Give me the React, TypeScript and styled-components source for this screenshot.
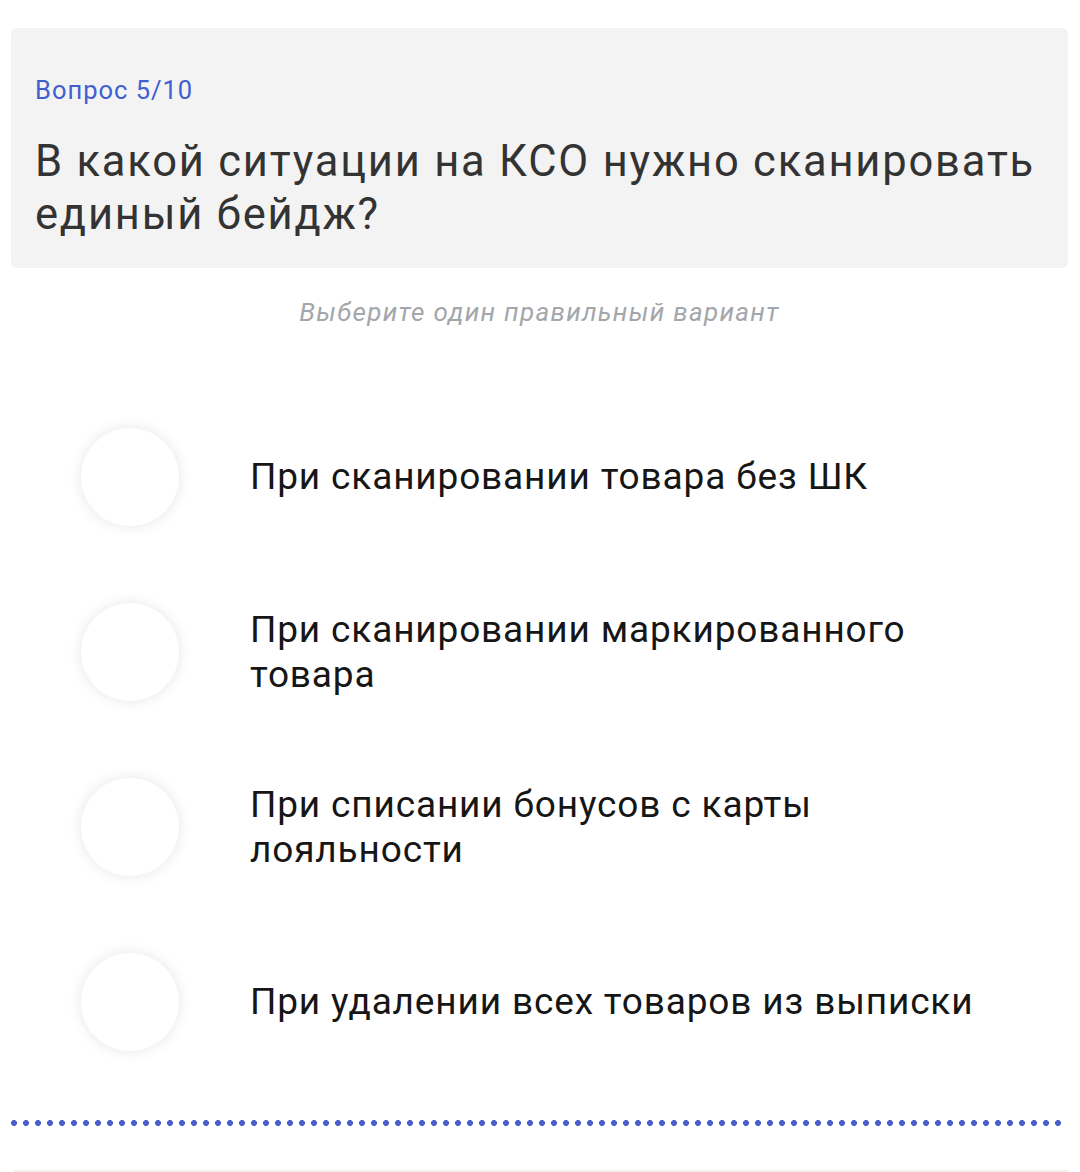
import * as React from 'react';
import styled, { createGlobalStyle } from 'styled-components';

const GlobalStyle = createGlobalStyle`
  html, body {
    margin: 0;
    padding: 0;
    background: #ffffff;
    font-family: Roboto, "Noto Sans", "Liberation Sans", sans-serif;
  }
`;

const answers = [
  'При сканировании товара без ШК',
  'При сканировании маркированного товара',
  'При списании бонусов с карты лояльности',
  'При удалении всех товаров из выписки',
];

const Page = styled.div`
  width: 1080px;
  height: 1172px;
  box-sizing: border-box;
  padding: 28px 12px 0 11px;
  display: flex;
  flex-direction: column;
  overflow: hidden;
`;

const Header = styled.div`
  background: #f3f3f3;
  border-radius: 6px;
  padding: 46px 24px 26px 24px;
  height: 240px;
  box-sizing: border-box;
`;

const Counter = styled.div`
  color: #3f5fd0;
  font-size: 25.5px;
  letter-spacing: 1px;
  line-height: 32px;
`;

const Question = styled.h1`
  margin: 29px 0 0 0;
  font-weight: 400;
  font-size: 43.5px;
  letter-spacing: 1.8px;
  line-height: 53px;
  color: #333333;
`;

const Hint = styled.div`
  margin-top: 26px;
  text-align: center;
  font-style: italic;
  font-size: 26px;
  letter-spacing: 1.3px;
  line-height: 36px;
  color: #a3a6aa;
`;

const List = styled.div`
  margin-top: 59px;
  display: flex;
  flex-direction: column;
`;

const Option = styled.label`
  height: 175px;
  display: flex;
  align-items: center;
  gap: 71px;
  padding-left: 70px;
  cursor: pointer;
`;

const Radio = styled.span`
  flex: 0 0 auto;
  width: 98px;
  height: 98px;
  border-radius: 50%;
  background: #ffffff;
  box-shadow: 0 0 14px rgba(0, 0, 0, 0.1);
`;

const OptionText = styled.span`
  font-size: 37px;
  letter-spacing: 0.85px;
  line-height: 45px;
  color: #161616;
  max-width: 750px;
`;

const Dots = styled.div`
  margin-top: 31px;
  height: 6px;
  background-image: radial-gradient(circle, #4a5fcc 2.7px, transparent 3.2px);
  background-size: 12px 6px;
  background-position: -3px 0;
  background-repeat: repeat-x;
  width: 1056px;
`;

const Footer = styled.div`
  margin-top: 44px;
  margin-left: 3px;
  border-top: 2px solid #f0f0f0;
`;

export default function App() {
  return (
    <>
      <GlobalStyle />
      <Page>
        <Header>
          <Counter>Вопрос 5/10</Counter>
          <Question>В какой ситуации на КСО нужно сканировать единый бейдж?</Question>
        </Header>
        <Hint>Выберите один правильный вариант</Hint>
        <List>
          {answers.map((a) => (
            <Option key={a}>
              <Radio />
              <OptionText>{a}</OptionText>
            </Option>
          ))}
        </List>
        <Dots />
        <Footer />
      </Page>
    </>
  );
}
